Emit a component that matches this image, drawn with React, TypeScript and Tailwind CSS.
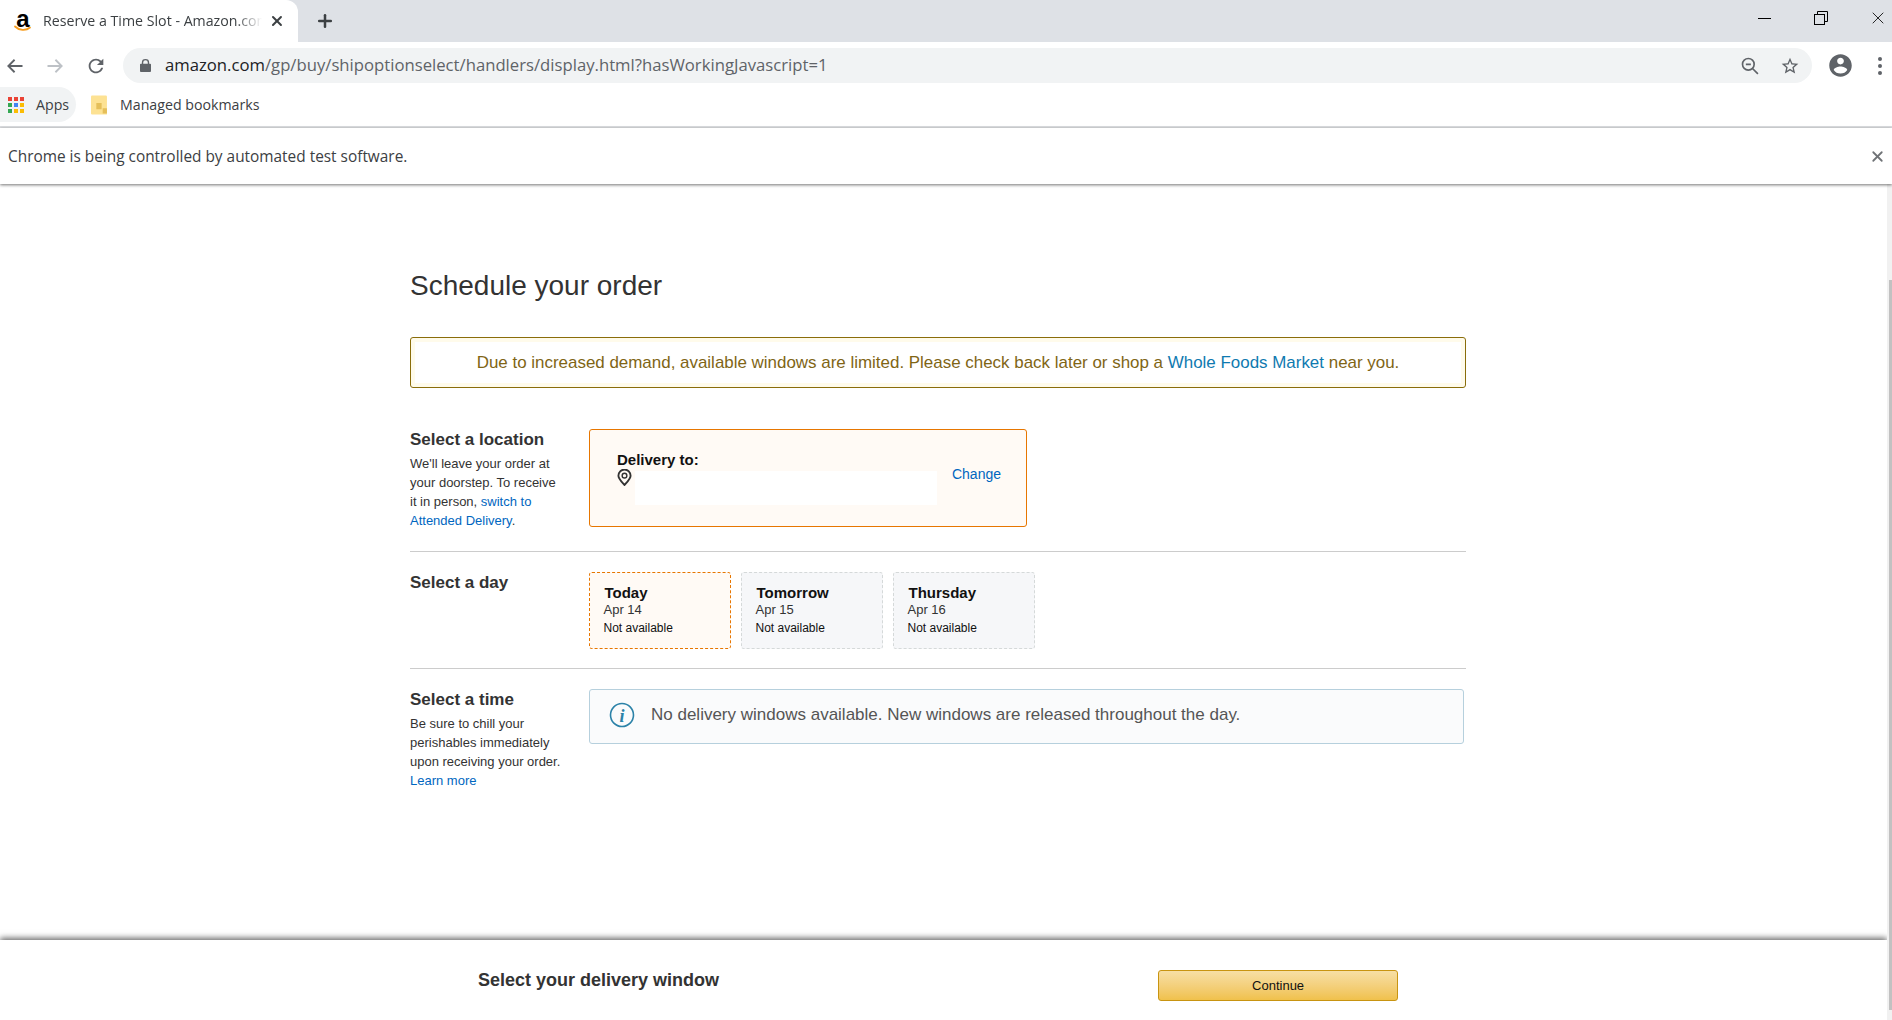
import { Plus, X } from "lucide-react";

const CHROME_FONT = "font-['Open_Sans','Noto_Sans',sans-serif]";

function AmazonFavicon() {
  return (
    <span className="relative flex h-[24px] w-[20px] shrink-0 justify-center">
      <span className="font-['Liberation_Sans',sans-serif] text-[24px] font-bold leading-[20px] text-black">a</span>
      <svg viewBox="0 0 20 8" className="absolute bottom-0 left-0 h-[8px] w-[20px]">
        <path d="M2 1.5c4 4 11 4.500 15 1" fill="none" stroke="#f79c1d" strokeWidth="1.800" strokeLinecap="round" />
      </svg>
    </span>
  );
}

function TabStrip() {
  return (
    <div className="flex h-[42px] shrink-0 items-center bg-[#dee1e6]">
      <div className="flex h-[42px] w-[298px] items-center rounded-tr-[12px] bg-white pl-[13px] pr-[13px]">
        <AmazonFavicon />
        <span className="mb-[1px] ml-[10px] w-[220px] overflow-hidden whitespace-nowrap text-[14.200px] text-[#3c4043] [mask-image:linear-gradient(to_right,black_88%,transparent)]">
          Reserve a Time Slot - Amazon.com
        </span>
        <X size={16} strokeWidth={3} className="ml-[7px] text-[#3c4043]" />
      </div>
      <Plus size={20} strokeWidth={3} className="ml-[17px] text-[#3c4043]" />
      <div className="ml-auto flex items-center pb-[6px]">
        <span className="h-[1px] w-[13px] bg-black" />
        <svg viewBox="0 0 14 14" className="ml-[43px] h-[14px] w-[14px]" fill="none" stroke="#000" strokeWidth="1">
          <rect x="0.500" y="3.500" width="10" height="10" />
          <path d="M3.500 3.500v-3h10v10h-3" />
        </svg>
        <X size={20} strokeWidth={1} className="ml-[40px] mr-[4px] text-black" />
      </div>
    </div>
  );
}

function Toolbar() {
  return (
    <div className="flex h-[42px] shrink-0 items-center bg-white pt-[5px]">
      <svg viewBox="0 0 24 24" className="ml-[5px] h-[20px] w-[20px]" fill="none" stroke="#5f6368" strokeWidth="2.200">
        <path d="M21 12H4M11.500 4.500 4 12l7.500 7.500" />
      </svg>
      <svg viewBox="0 0 24 24" className="ml-[20px] h-[20px] w-[20px]" fill="none" stroke="#bdc1c6" strokeWidth="2.200">
        <path d="M3 12h17M12.500 4.500 20 12l-7.500 7.500" />
      </svg>
      <svg viewBox="0 0 24 24" className="ml-[20px] h-[22px] w-[22px]" fill="#5f6368">
        <path d="M17.650 6.350A7.958 7.958 0 0012 4c-4.420 0-7.990 3.580-7.990 8s3.570 8 7.990 8c3.730 0 6.840-2.550 7.730-6h-2.080A5.990 5.990 0 0112 18c-3.310 0-6-2.690-6-6s2.690-6 6-6c1.660 0 3.140.690 4.220 1.780L13 11h7V4l-2.350 2.350z" />
      </svg>
      <div className="ml-[16px] flex h-[35px] w-[1689px] items-center rounded-full bg-[#f1f3f4] pl-[17px] pr-[12px]">
        <svg viewBox="0 0 12 14" className="h-[13px] w-[11px]" fill="#5f6368">
          <path d="M2 5V3.800a4 3.800 0 018 0V5h1a1 1 0 011 1v7a1 1 0 01-1 1H1a1 1 0 01-1-1V6a1 1 0 011-1zm1.500 0h5V3.800a2.500 2.400 0 00-5 0z" />
        </svg>
        <span className="ml-[14px] whitespace-nowrap text-[16.700px] leading-none text-[#5f6368]">
          <span className="text-[#202124]">amazon.com</span>/gp/buy/shipoptionselect/handlers/display.html?hasWorkingJavascript=1
        </span>
        <svg viewBox="0 0 24 24" className="ml-auto h-[20px] w-[20px]" fill="none" stroke="#5f6368" strokeWidth="2">
          <circle cx="10" cy="10" r="7" />
          <path d="M7 10h6M15 15l6.500 6.500" />
        </svg>
        <svg viewBox="0 0 24 24" className="ml-[20px] h-[20px] w-[20px]" fill="#5f6368">
          <path d="M22 9.240l-7.190-.620L12 2 9.190 8.630 2 9.240l5.460 4.730L5.820 21 12 17.270 18.180 21l-1.630-7.030L22 9.240zM12 15.400l-3.760 2.270 1-4.280-3.320-2.880 4.380-.380L12 6.100l1.710 4.040 4.380.380-3.320 2.880 1 4.280L12 15.400z" />
        </svg>
      </div>
      <svg viewBox="0 0 24 24" className="ml-[15px] h-[27px] w-[27px]" fill="#5f6368">
        <path d="M12 2C6.480 2 2 6.480 2 12s4.480 10 10 10 10-4.480 10-10S17.520 2 12 2zm0 3c1.660 0 3 1.340 3 3s-1.340 3-3 3-3-1.340-3-3 1.340-3 3-3zm0 14.200c-2.500 0-4.710-1.280-6-3.220.030-1.990 4-3.080 6-3.080 1.990 0 5.970 1.090 6 3.080-1.290 1.940-3.500 3.220-6 3.220z" />
      </svg>
      <div className="ml-[24px] flex flex-col gap-[3px]">
        <span className="h-[4px] w-[4px] rounded-full bg-[#5f6368]" />
        <span className="h-[4px] w-[4px] rounded-full bg-[#5f6368]" />
        <span className="h-[4px] w-[4px] rounded-full bg-[#5f6368]" />
      </div>
    </div>
  );
}

function BookmarksBar() {
  const dots = ["#ea4335", "#ea4335", "#ea4335", "#34a853", "#4285f4", "#fbbc04", "#34a853", "#fbbc04", "#fbbc04"];
  return (
    <div className="flex h-[44px] shrink-0 items-center border-b-2 border-[#dcdee1] bg-white pb-[1px] text-[14.200px] text-[#3c4043]">
      <div className="flex h-[35px] w-[76px] items-center rounded-r-full bg-[#f1f3f4] pl-[8px]">
        <div className="grid grid-cols-3 gap-[2px]">
          {dots.map((c, i) => (
            <span key={i} className="h-[4px] w-[4px]" style={{ background: c }} />
          ))}
        </div>
        <span className="ml-[12px]">Apps</span>
      </div>
      <svg viewBox="0 0 16 18" className="ml-[15px] h-[20px] w-[17px]">
        <path d="M0 1a1 1 0 011-1h13a1 1 0 011 1v17H1a1 1 0 01-1-1z" fill="#fde293" />
        <path d="M5 7h5v6H5zM11 12h4v5h-4z" fill="#e5bf5a" />
      </svg>
      <span className="ml-[12px]">Managed bookmarks</span>
    </div>
  );
}

function InfoBar() {
  return (
    <div className="relative z-10 flex h-[56px] shrink-0 items-center justify-between bg-white pl-[8px] pr-[6px] text-[15.400px] text-[#3c4043] shadow-[0_1px_3px_rgba(0,0,0,0.55)]">
      <span className="pt-[2px]">Chrome is being controlled by automated test software.</span>
      <X size={17} strokeWidth={2.500} className="text-[#6f7276]" />
    </div>
  );
}

function SideColumn({ title, children }: { title: string; children?: React.ReactNode }) {
  return (
    <div className="w-[179px] shrink-0 pt-[1px]">
      <h3 className="text-[17px] font-bold leading-[20px] text-[#333]">{title}</h3>
      {children && <p className="mt-[4px] w-[155px] text-[13px] leading-[19px] text-[#333]">{children}</p>}
    </div>
  );
}

function DayCard({ day, date, active }: { day: string; date: string; active?: boolean }) {
  return (
    <div
      className={`h-[77px] w-[142px] rounded-[3px] border border-dashed pl-[13.500px] pt-[11px] text-[#111] ${
        active ? "border-[#e77600] bg-[#fffaf5]" : "border-[#d5d9d9] bg-[#f6f7f9]"
      }`}
    >
      <p className="pl-[1px] text-[15px] font-bold leading-[18px]">{day}</p>
      <p className="text-[13px] leading-[16px] text-[#333]">{date}</p>
      <p className="mt-[2px] text-[12px] leading-[16px]">Not available</p>
    </div>
  );
}

function Schedule() {
  return (
    <main className="min-h-0 flex-1 overflow-hidden bg-white pl-[410px] pt-[84px] font-['Liberation_Sans',Arial,sans-serif]">
      <div className="w-[1056px]">
        <h1 className="text-[28px] font-normal leading-[36px] text-[#333]">Schedule your order</h1>

        <div className="mt-[33px] flex h-[51px] items-center justify-center rounded-[3px] border border-[#8a6d0a] bg-white text-[16.950px] text-[#806515] shadow-[inset_0_0_0_4px_#fffbeb]">
          <span>
            Due to increased demand, available windows are limited. Please check back later or shop a{" "}
            <span className="text-[#0f7ab0]">Whole Foods Market</span> near you.
          </span>
        </div>

        <section className="mt-[41px] flex border-b border-[#ccc] pb-[21px]">
          <SideColumn title="Select a location">
            We'll leave your order at your doorstep. To receive it in person,{" "}
            <span className="text-[#0066c0]">switch to Attended Delivery</span>.
          </SideColumn>
          <div className="flex h-[98px] w-[438px] items-center rounded-[3px] border border-[#e77600] bg-[#fffaf5] pl-[27px] pr-[25px]">
            <div className="flex-1">
              <p className="text-[15px] font-bold leading-[18px] text-[#111]">Delivery to:</p>
              <div className="flex items-start">
                <svg viewBox="0 0 16 18" className="h-[17px] w-[15px] shrink-0" fill="none" stroke="#333" strokeWidth="2">
                  <path d="M8 17C4 12.500 1.500 10 1.500 7a6.500 6.500 0 0113 0c0 3-2.500 5.500-6.500 10z" />
                  <circle cx="8" cy="7" r="2.500" strokeWidth="1.500" />
                </svg>
                <span className="ml-[3px] mt-[2px] h-[34px] w-[302px] bg-white" />
              </div>
            </div>
            <span className="mb-[8px] text-[14px] text-[#0066c0]">Change</span>
          </div>
        </section>

        <section className="flex border-b border-[#ccc] pb-[19px] pt-[20px]">
          <SideColumn title="Select a day" />
          <div className="flex gap-[10px]">
            <DayCard day="Today" date="Apr 14" active />
            <DayCard day="Tomorrow" date="Apr 15" />
            <DayCard day="Thursday" date="Apr 16" />
          </div>
        </section>

        <section className="flex pt-[20px]">
          <SideColumn title="Select a time">
            Be sure to chill your perishables immediately upon receiving your order.{" "}
            <span className="text-[#0066c0]">Learn more</span>
          </SideColumn>
          <div className="flex h-[55px] w-[875px] items-center rounded-[3px] border border-[#b6d0dd] bg-[#fafbfc] pb-[3px] pl-[19px]">
            <svg viewBox="0 0 26 26" className="h-[26px] w-[26px]">
              <circle cx="13" cy="13" r="11.500" fill="none" stroke="#2b82a8" strokeWidth="1.600" />
              <text x="13" y="19.500" textAnchor="middle" fontSize="18" fontWeight="700" fontStyle="italic" fontFamily="Liberation Serif, serif" fill="#2b82a8">i</text>
            </svg>
            <span className="ml-[16px] text-[17px] text-[#555]">
              No delivery windows available. New windows are released throughout the day.
            </span>
          </div>
        </section>
      </div>
    </main>
  );
}

function Footer() {
  return (
    <footer className="relative z-10 flex h-[80px] shrink-0 bg-white font-['Liberation_Sans',Arial,sans-serif] shadow-[0_-2px_6px_rgba(0,0,0,0.6)]">
      <span className="ml-[478px] mt-[29px] text-[18px] font-bold leading-[22px] text-[#333]">Select your delivery window</span>
      <div className="ml-[439px] mt-[30px] flex h-[31px] w-[240px] items-center justify-center rounded-[3px] border border-[#c89411] bg-gradient-to-b from-[#f7dfa5] to-[#f0c14b] text-[13px] text-[#111]">
        Continue
      </div>
    </footer>
  );
}

export default function App() {
  return (
    <div className={`flex h-screen flex-col overflow-hidden bg-white ${CHROME_FONT}`}>
      <TabStrip />
      <Toolbar />
      <BookmarksBar />
      <InfoBar />
      <div className="flex min-h-0 flex-1">
        <div className="flex min-w-0 flex-1 flex-col overflow-hidden">
          <Schedule />
          <Footer />
        </div>
        {/* scrollbar */}
        <div className="flex w-[5px] shrink-0 flex-col items-end bg-[#f1f1f1] pb-[10px] pt-[96px]">
          <div className="w-[3px] flex-1 bg-[#c1c1c1]" />
        </div>
      </div>
    </div>
  );
}
